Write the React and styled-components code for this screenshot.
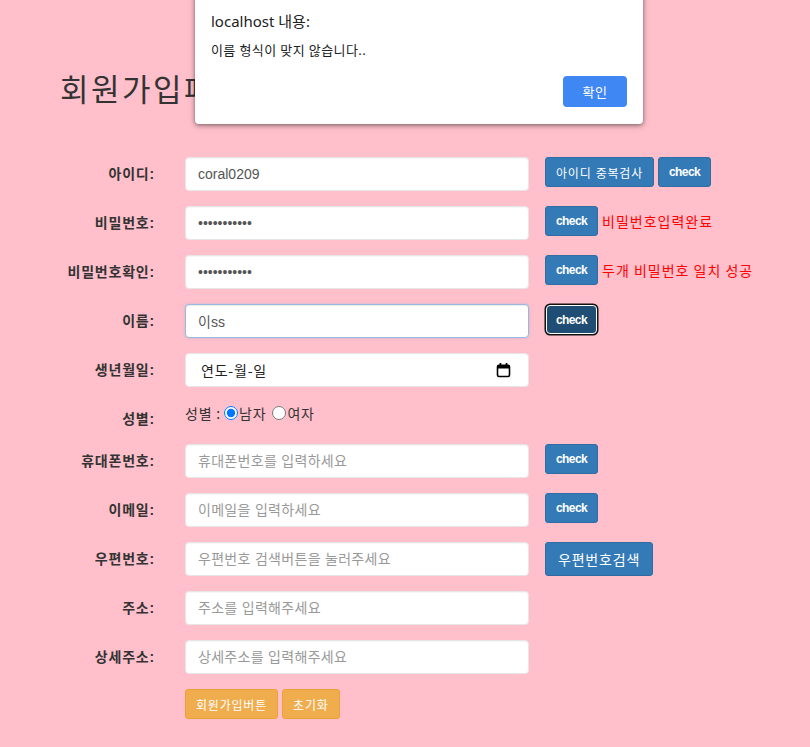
import React from "react";
import styled, { createGlobalStyle } from "styled-components";

const Global = createGlobalStyle`
  html, body { margin: 0; padding: 0; background: #ffc0cb; }
  body {
    font-family: "Liberation Sans", "Noto Sans CJK KR", sans-serif;
    font-size: 14px;
    line-height: 20px;
    color: #333;
  }
  * { box-sizing: border-box; }
`;

const Page = styled.div`
  position: relative;
  min-height: 747px;
  padding: 70px 0 0 0;
`;

const Title = styled.h1`
  margin: 0 0 52px 60px;
  font-family: "Noto Sans CJK KR", sans-serif;
  font-size: 31px;
  line-height: 35px;
  font-weight: 400;
  letter-spacing: 2.5px;
  color: #333;
`;

const Form = styled.form`
  display: flex;
  flex-direction: column;
`;

const Row = styled.div`
  display: flex;
  align-items: flex-start;
  margin-bottom: 15px;
`;

const Label = styled.label`
  width: 155px;
  text-align: right;
  padding-top: 7px;
  font-weight: 700;
  font-size: 14px;
  line-height: 20px;
  letter-spacing: 0.8px;
  color: #333;
  flex-shrink: 0;
`;

const Field = styled.div`
  margin-left: 30px;
  width: 344px;
  flex-shrink: 0;
`;

const Input = styled.input`
  display: block;
  width: 100%;
  height: 34px;
  padding: 6px 12px;
  font-family: "Liberation Sans", "Noto Sans CJK KR", sans-serif;
  font-size: 14px;
  line-height: 20px;
  color: #555;
  background: #fff;
  border: 1px solid ${(p) => (p.$focus ? "#9ab8dc" : "#e6e6e6")};
  border-radius: 4px;
  box-shadow: ${(p) =>
    p.$focus
      ? "inset 0 1px 1px rgba(0,0,0,.075), 0 0 3px rgba(102,175,233,.4)"
      : "inset 0 1px 1px rgba(0,0,0,.04)"};
  outline: none;
  &::placeholder { color: #999; letter-spacing: 0.3px; }
`;

const DateBox = styled.div`
  height: 34px;
  padding: 6px 17px 6px 15px;
  display: flex;
  align-items: center;
  justify-content: space-between;
  background: #fff;
  border: 1px solid #e6e6e6;
  border-radius: 4px;
  font-family: "Noto Sans CJK KR", sans-serif;
  font-size: 14px;
  color: #222;
  letter-spacing: 0.8px;
`;

const Actions = styled.div`
  margin-left: 16px;
  display: flex;
  align-items: center;
  gap: 4px;
`;

const Btn = styled.button`
  display: inline-flex;
  align-items: center;
  justify-content: center;
  height: ${(p) => (p.$lg ? 34 : 30)}px;
  padding: 0 ${(p) => (p.$lg ? 12 : 10)}px;
  font-family: "Liberation Sans", "Noto Sans CJK KR", sans-serif;
  font-size: ${(p) => (p.$lg ? 14 : 12)}px;
  font-weight: ${(p) => (p.$latin ? 700 : 400)};
  letter-spacing: ${(p) => (p.$latin ? "-0.6px" : "0.8px")};
  color: #fff;
  background: ${(p) => (p.$warn ? "#f0ad4e" : "#337ab7")};
  border: 1px solid ${(p) => (p.$warn ? "#eea236" : "#2e6da4")};
  border-radius: 3px;
  cursor: pointer;
`;

const FocusBtn = styled(Btn)`
  height: 29px;
  width: 51px;
  background: #204d74;
  border: 1px solid #fff;
  box-shadow: 0 0 0 1.5px #111;
  border-radius: 4px;
  margin-top: 1px;
  margin-left: 1px;
`;

const Msg = styled.span`
  color: #ff0000;
  font-family: "Noto Sans CJK KR", sans-serif;
  font-size: 14px;
  line-height: 20px;
  letter-spacing: 1px;
`;

const Gender = styled.div`
  margin-left: 30px;
  display: flex;
  align-items: center;
  height: 22px;
  font-family: "Noto Sans CJK KR", sans-serif;
  font-size: 14px;
  letter-spacing: 0.8px;
  color: #333;
`;

const Radio = styled.input`
  width: 14px;
  height: 14px;
  margin: 0 1px 0 ${(p) => (p.$ml ?? 3)}px;
  accent-color: #0075ff;
`;

const Buttons = styled.div`
  margin-left: 185px;
  display: flex;
  gap: 4px;
`;

const Dialog = styled.div`
  position: absolute;
  left: 195px;
  top: -6px;
  width: 448px;
  height: 130px;
  background: #fff;
  border-radius: 0 0 4px 4px;
  box-shadow: 0 1px 4px rgba(0,0,0,0.45), 0 2px 8px rgba(0,0,0,0.15);
  padding: 11px 16px 0 16px;
  display: flex;
  flex-direction: column;
  font-family: "Noto Sans", "Noto Sans CJK KR", sans-serif;
  color: #202124;
`;

const DlgTitle = styled.div`
  margin-top: 6px;
  font-size: 15px;
  line-height: 20px;
`;

const DlgMsg = styled.div`
  margin-top: 10px;
  font-size: 13px;
  line-height: 18px;
  letter-spacing: 0.4px;
`;

const DlgFooter = styled.div`
  margin-top: 17px;
  display: flex;
  justify-content: flex-end;
`;

const DlgBtn = styled.button`
  width: 64px;
  height: 31px;
  border: none;
  border-radius: 4px;
  background: #3f87f2;
  color: #fff;
  font-family: "Noto Sans CJK KR", sans-serif;
  font-size: 13px;
  letter-spacing: 0.5px;
`;

const CalendarIcon = () => (
  <svg width="15" height="16" viewBox="0 0 15 16">
    <rect x="1.5" y="3.2" width="12" height="11.3" rx="1.5" fill="none" stroke="#000" strokeWidth="1.6" />
    <rect x="1.5" y="3.2" width="12" height="3.3" fill="#000" />
    <rect x="3.6" y="1" width="1.7" height="3" fill="#000" />
    <rect x="9.7" y="1" width="1.7" height="3" fill="#000" />
  </svg>
);

export default function App() {
  return (
    <>
      <Global />
      <Page>
        <Title>회원가입페이지</Title>
        <Form onSubmit={(e) => e.preventDefault()}>
          <Row>
            <Label>아이디:</Label>
            <Field><Input defaultValue="coral0209" /></Field>
            <Actions>
              <Btn type="button">아이디 중복검사</Btn>
              <Btn type="button" $latin>check</Btn>
            </Actions>
          </Row>
          <Row>
            <Label>비밀번호:</Label>
            <Field><Input type="password" defaultValue="12345678901" /></Field>
            <Actions>
              <Btn type="button" $latin>check</Btn>
              <Msg>비밀번호입력완료</Msg>
            </Actions>
          </Row>
          <Row>
            <Label>비밀번호확인:</Label>
            <Field><Input type="password" defaultValue="12345678901" /></Field>
            <Actions>
              <Btn type="button" $latin>check</Btn>
              <Msg>두개 비밀번호 일치 성공</Msg>
            </Actions>
          </Row>
          <Row>
            <Label>이름:</Label>
            <Field><Input $focus defaultValue="이ss" /></Field>
            <Actions>
              <FocusBtn type="button" $latin>check</FocusBtn>
            </Actions>
          </Row>
          <Row>
            <Label>생년월일:</Label>
            <Field>
              <DateBox>
                <span>연도-월-일</span>
                <CalendarIcon />
              </DateBox>
            </Field>
          </Row>
          <Row>
            <Label>성별:</Label>
            <Gender>
              성별 :<Radio type="radio" name="g" defaultChecked />남자
              <Radio type="radio" name="g" $ml={6} />여자
            </Gender>
          </Row>
          <Row>
            <Label>휴대폰번호:</Label>
            <Field><Input placeholder="휴대폰번호를 입력하세요" /></Field>
            <Actions><Btn type="button" $latin>check</Btn></Actions>
          </Row>
          <Row>
            <Label>이메일:</Label>
            <Field><Input placeholder="이메일을 입력하세요" /></Field>
            <Actions><Btn type="button" $latin>check</Btn></Actions>
          </Row>
          <Row>
            <Label>우편번호:</Label>
            <Field><Input placeholder="우편번호 검색버튼을 눌러주세요" /></Field>
            <Actions><Btn type="button" $lg>우편번호검색</Btn></Actions>
          </Row>
          <Row>
            <Label>주소:</Label>
            <Field><Input placeholder="주소를 입력해주세요" /></Field>
          </Row>
          <Row>
            <Label>상세주소:</Label>
            <Field><Input placeholder="상세주소를 입력해주세요" /></Field>
          </Row>
          <Buttons>
            <Btn type="submit" $warn>회원가입버튼</Btn>
            <Btn type="reset" $warn>초기화</Btn>
          </Buttons>
        </Form>
        <Dialog>
          <DlgTitle>localhost 내용:</DlgTitle>
          <DlgMsg>이름 형식이 맞지 않습니다..</DlgMsg>
          <DlgFooter><DlgBtn>확인</DlgBtn></DlgFooter>
        </Dialog>
      </Page>
    </>
  );
}
